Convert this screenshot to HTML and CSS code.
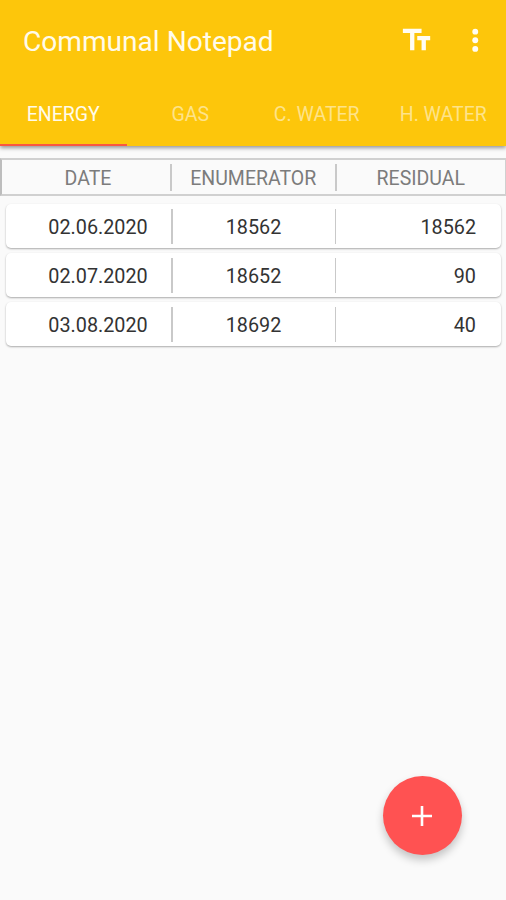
FILE: index.html
```html
<!DOCTYPE html>
<html lang="en">
<head>
<meta charset="utf-8">
<title>Communal Notepad</title>
<link rel="stylesheet" href="styles.css">
</head>
<body>
<header class="appbar">
  <div class="toolbar">
    <h1 class="title"><span>Communal Notepad</span></h1>
    <svg class="icon" viewBox="0 0 24 24"><path d="M2 4v3h5v12h3V7h5V4H2zm19 5h-9v3h3v7h3v-7h3V9z"/></svg>
    <svg class="icon more" viewBox="0 0 24 24"><circle cx="12" cy="6" r="2.05"/><circle cx="12" cy="12" r="2.05"/><circle cx="12" cy="18" r="2.05"/></svg>
  </div>
  <nav class="tabs">
    <a class="tab active">ENERGY</a>
    <a class="tab">GAS</a>
    <a class="tab">C. WATER</a>
    <a class="tab">H. WATER</a>
  </nav>
</header>
<main>
  <div class="row head"><span class="date">DATE</span><i></i><span>ENUMERATOR</span><i></i><span>RESIDUAL</span></div>
  <div class="row card"><span class="date">02.06.2020</span><i></i><span>18562</span><i></i><span class="res">18562</span></div>
  <div class="row card"><span class="date">02.07.2020</span><i></i><span>18652</span><i></i><span class="res">90</span></div>
  <div class="row card"><span class="date">03.08.2020</span><i></i><span>18692</span><i></i><span class="res">40</span></div>
</main>
<button class="fab" aria-label="Add"><svg viewBox="0 0 20 20"><path d="M8.7 0h2.6v8.7H20v2.6h-8.7V20H8.7v-8.7H0V8.7h8.7z"/></svg></button>
</body>
</html>
```
FILE: styles.css
```css
* { box-sizing: border-box; }
body {
  margin: 0;
  height: 900px;
  overflow: hidden;
  background: #fafafa;
  font-family: Roboto, "Liberation Sans", sans-serif;
}
.appbar {
  height: 146px;
  background: #fdc60b;
  box-shadow: 0 2px 4px rgba(0, 0, 0, .4);
  color: #fffbea;
}
.toolbar {
  display: flex;
  align-items: center;
  height: 82px;
  padding: 0 13.5px 0 23px;
}
.title {
  flex: 1;
  margin: 0;
  padding-top: 2px;
  font-size: 28.1px;
  font-weight: 400;
  line-height: 34px;
  white-space: nowrap;
}
.icon {
  width: 34.5px;
  height: 34.5px;
  margin-top: -2px;
  fill: #fffdf5;
}
.more { margin-left: 23.5px; }
.tabs {
  display: grid;
  grid-template-columns: repeat(4, 1fr);
  height: 64px;
}
.tab {
  height: 64px;
  padding-left: 1px;
  text-align: center;
  font-size: 19.5px;
  line-height: 65px;
  color: #fee38a;
  white-space: nowrap;
}
.active {
  padding-left: 0;
  color: #fffbea;
  border-bottom: 2.5px solid #fa5740;
}
.row {
  display: grid;
  grid-template-columns: 165px 1.5px 162px 1.5px 1fr;
  align-items: center;
  text-align: center;
  font-size: 19.8px;
  color: #333;
}
.row span { padding-top: 2px; }
.row i {
  height: 35px;
  background: #c9c9c9;
}
.head {
  grid-template-columns: 168px 1.5px 163.5px 1.5px 1fr;
  height: 38px;
  margin-top: 12px;
  margin-bottom: 8px;
  border: 2px solid #d0d0d0;
  border-left-color: #bdbdbd;
  border-right-width: 1px;
  font-size: 19.5px;
  color: #7c7c7c;
}
.head i { height: 27px; }
.head .date { padding-left: 4px; }
.card {
  height: 44px;
  margin: 0 5px 5px 6px;
  border-radius: 5px;
  background: #fff;
  box-shadow: 0 1px 2px rgba(0, 0, 0, .32);
}
.card .date { padding-left: 19px; }
.card .res {
  padding-right: 25px;
  text-align: right;
}
.fab {
  position: absolute;
  left: 383px;
  top: 776px;
  display: grid;
  place-items: center;
  width: 79px;
  height: 79px;
  padding: 0;
  border: 0;
  border-radius: 50%;
  background: #ff5252;
  box-shadow: 0 5px 8px rgba(0, 0, 0, .22);
}
.fab svg {
  width: 20px;
  height: 20px;
  margin-right: 1px;
  fill: #fff;
}
```
